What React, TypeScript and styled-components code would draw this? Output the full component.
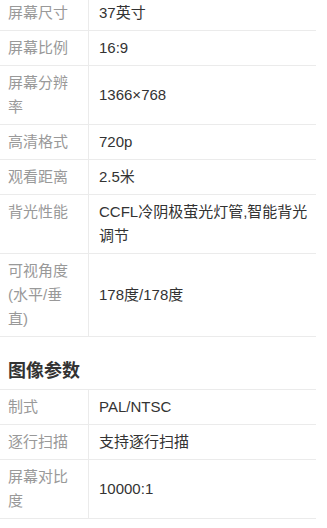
import React from 'react';
import styled, {createGlobalStyle} from 'styled-components';

const GlobalStyle = createGlobalStyle`
  html, body {
    margin: 0;
    padding: 0;
    background: #fff;
  }

  body {
    font-family: 'Liberation Sans', 'Noto Sans CJK SC', sans-serif;
    overflow: hidden;
  }
`;

const Page = styled.div`
  width: 316px;
  margin-top: -5px;
`;

const SpecTable = styled.div`
  border-top: 1px solid #ebebeb;
`;

const Row = styled.div`
  display: grid;
  grid-template-columns: 89px 1fr;
  border-bottom: 1px solid #ebebeb;
`;

const Label = styled.div`
  box-sizing: border-box;
  padding: 5px 8px;
  border-right: 1px solid #ebebeb;
  font-size: 15px;
  line-height: 24px;
  color: #999;
  word-break: break-all;
`;

const Value = styled.div`
  display: flex;
  align-items: center;
  padding: 5px 8px 5px 10px;
  font-size: 15px;
  line-height: 24px;
  color: #333;
  word-break: break-all;
`;

const SectionTitle = styled.h3`
  margin: 0;
  padding: 22px 8px 6px;
  font-size: 18px;
  font-weight: 700;
  line-height: 24px;
  color: #333;
`;

type Spec = [string, string];

const display: Spec[] = [
  ['屏幕尺寸', '37英寸'],
  ['屏幕比例', '16:9'],
  ['屏幕分辨率', '1366×768'],
  ['高清格式', '720p'],
  ['观看距离', '2.5米'],
  ['背光性能', 'CCFL冷阴极萤光灯管,智能背光调节'],
  ['可视角度(水平/垂直)', '178度/178度'],
];

const image: Spec[] = [
  ['制式', 'PAL/NTSC'],
  ['逐行扫描', '支持逐行扫描'],
  ['屏幕对比度', '10000:1'],
];

const Specs = ({items}: {items: Spec[]}) => (
  <SpecTable>
    {items.map(([name, value]) => (
      <Row key={name}>
        <Label>{name}</Label>
        <Value>{value}</Value>
      </Row>
    ))}
  </SpecTable>
);

const App = () => {
  return (
    <>
      <GlobalStyle />
      <Page>
        <Specs items={display} />
        <SectionTitle>图像参数</SectionTitle>
        <Specs items={image} />
      </Page>
    </>
  );
};

export default App;
